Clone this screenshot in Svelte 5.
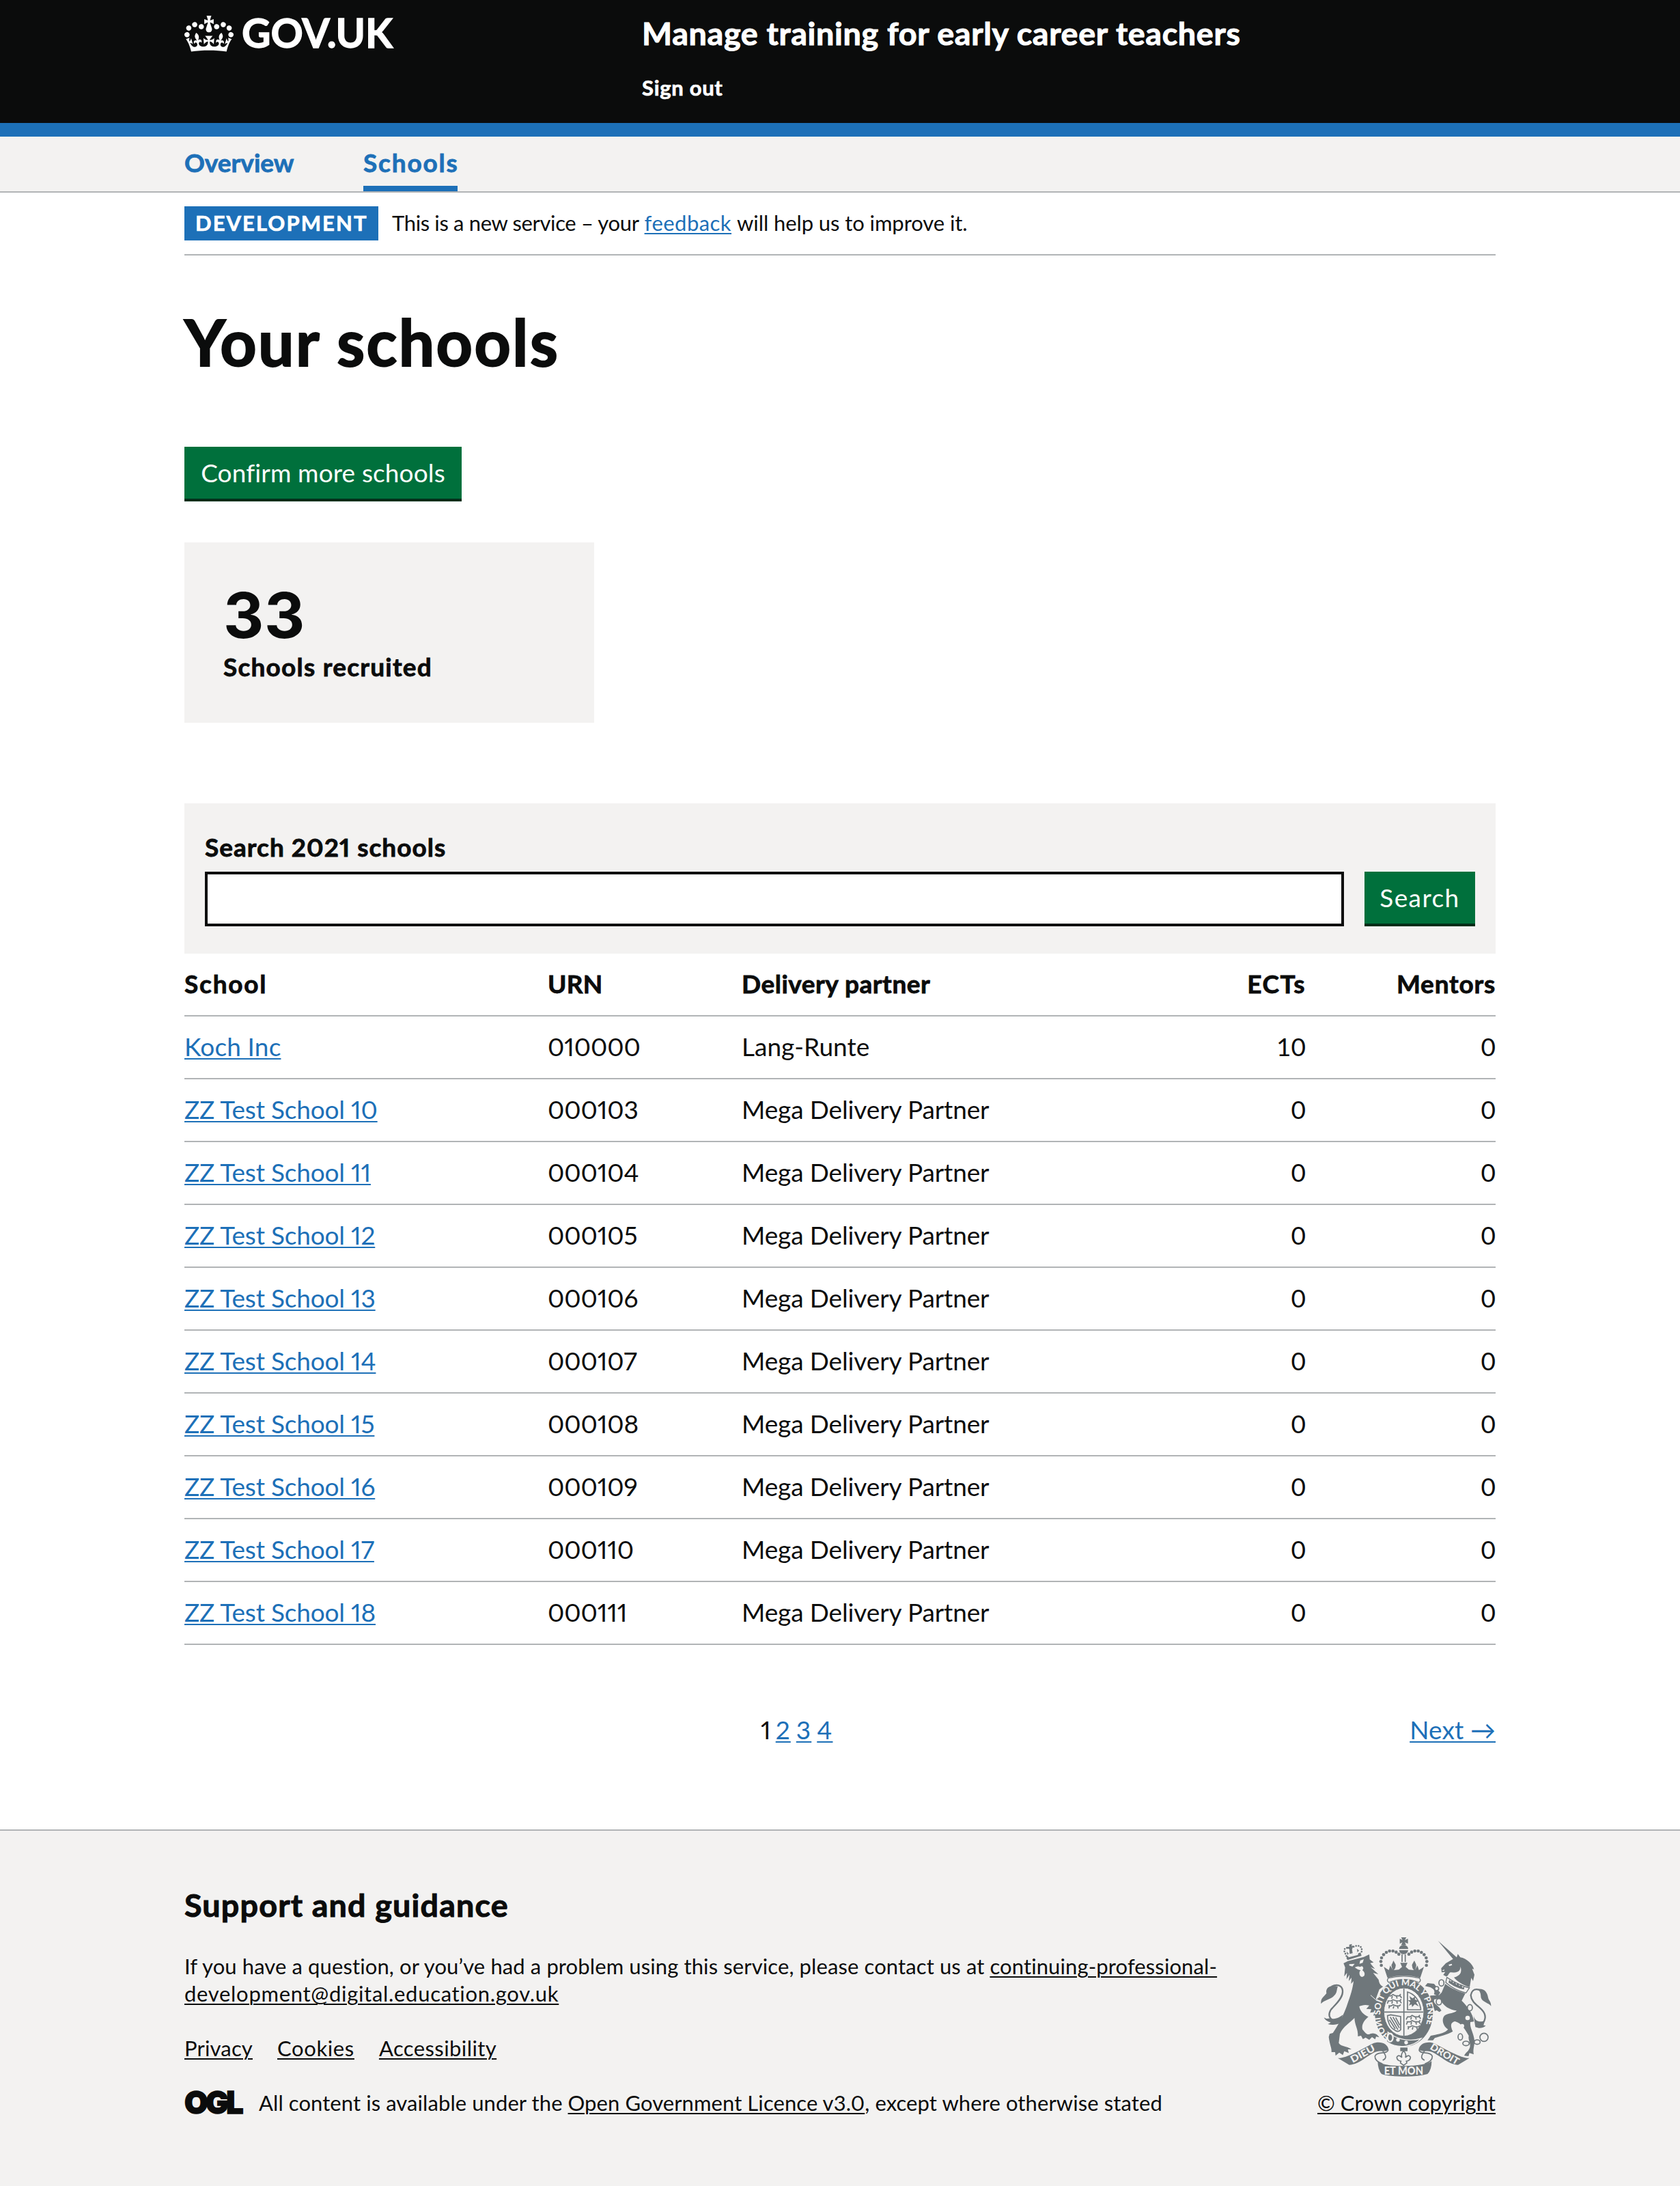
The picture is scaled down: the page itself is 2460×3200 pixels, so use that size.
<script>
  const schools = [
    { name: 'Koch Inc', urn: '010000', partner: 'Lang-Runte', ects: 10, mentors: 0 },
    ...Array.from({ length: 9 }, (_, i) => ({
      name: `ZZ Test School ${10 + i}`,
      urn: `000${103 + i}`,
      partner: 'Mega Delivery Partner',
      ects: 0,
      mentors: 0
    }))
  ];
  const otherPages = [2, 3, 4];

  // Pearls along the left arch of the crown; the right arch mirrors them.
  const pearls = [[369, 231], [367, 214], [370, 198], [379, 184], [391, 174], [405, 168], [420, 168], [434, 173], [446, 182]];
  const chain = [[633, 308, 11, 14], [612, 333, 9, 9], [622, 391, 12, 14], [758, 417, 11, 14], [716, 545, 10, 14], [741, 574, 14, 10], [790, 568, 13, 10], [820, 547, 18, 18]];
</script>

<header class="header">
  <div class="container header-row">
    <a class="logo" href="#home">
      <svg class="crown" viewBox="0 0 132 97" aria-hidden="true"><path fill="currentColor" fill-rule="evenodd" d="M25 30.2c3.5 1.5 7.7-.2 9.1-3.7 1.5-3.6-.2-7.8-3.9-9.2-3.6-1.4-7.6.3-9.1 3.9-1.4 3.5.3 7.5 3.9 9zM9 39.5c3.6 1.5 7.8-.2 9.2-3.7 1.5-3.6-.2-7.8-3.9-9.1-3.6-1.5-7.6.2-9.1 3.8-1.4 3.5.3 7.5 3.8 9zM4.4 57.2c3.5 1.5 7.7-.2 9.1-3.8 1.5-3.6-.2-7.7-3.9-9.1-3.5-1.5-7.6.3-9.1 3.8-1.4 3.5.3 7.6 3.9 9.1zm38.3-21.4c3.5 1.5 7.7-.2 9.1-3.8 1.5-3.6-.2-7.7-3.9-9.1-3.6-1.5-7.6.3-9.1 3.8-1.3 3.6.4 7.7 3.9 9.1zm64.4-5.6c-3.6 1.5-7.8-.2-9.1-3.7-1.5-3.6.2-7.8 3.8-9.2 3.6-1.4 7.7.3 9.2 3.9 1.3 3.5-.4 7.5-3.9 9zm15.9 9.3c-3.6 1.5-7.7-.2-9.1-3.7-1.5-3.6.2-7.8 3.7-9.1 3.6-1.5 7.7.2 9.2 3.8 1.5 3.5-.3 7.5-3.8 9zm4.7 17.7c-3.6 1.5-7.8-.2-9.2-3.8-1.5-3.6.2-7.7 3.9-9.1 3.6-1.5 7.7.3 9.2 3.8 1.3 3.5-.4 7.6-3.9 9.1zM89.3 35.8c-3.6 1.5-7.8-.2-9.2-3.8-1.4-3.6.2-7.7 3.9-9.1 3.6-1.5 7.7.3 9.2 3.8 1.4 3.6-.3 7.7-3.9 9.1zM69.7 17.7l8.9 4.7V9.3l-8.9 2.8c-.2-.3-.5-.6-.9-.9L72.4 0H59.6l3.5 11.2c-.3.3-.6.5-.9.9l-8.8-2.8v13.1l8.8-4.7c.3.3.6.7.9.9l-5 15.4v.1c-.2.8-.4 1.6-.4 2.4 0 4.1 3.1 7.5 7 8.1h.2c.3 0 .7.1 1 .1.4 0 .7 0 1-.1h.2c4-.6 7.1-4.1 7.1-8.1 0-.8-.1-1.7-.4-2.4V34l-5.1-15.4c.4-.2.7-.6 1-.9zM66 92.8c16.9 0 32.8 1.1 47.1 3.2 4-16.9 8.9-26.7 14-33.5l-9.6-3.4c1 4.9 1.1 7.2 0 10.2-1.5-1.4-3-4.3-4.2-8.7L108.6 76c2.8-2 5-3.2 7.5-3.3-4.4 9.4-10 11.9-13.6 11.2-4.3-.8-6.3-4.6-5.6-7.9 1-4.7 5.7-5.9 8-.5 4.3-8.7-3-11.4-7.6-8.8 7.1-7.2 7.9-13.5 2.1-21.1-8 6.1-8.1 12.3-4.5 20.8-4.7-5.4-12.1-2.5-9.5 6.2 3.4-5.2 7.9-2 7.2 3.1-.6 4.3-6.4 7.8-13.5 7.2-10.3-.9-10.9-8-11.2-13.8 2.5-.5 7.1 1.8 11 7.3L80.2 60c-4.1 4.4-8 5.3-12.3 5.4 1.4-4.4 8-11.6 8-11.6H55.5s6.4 7.2 7.9 11.6c-4.2-.1-8-1-12.3-5.4l1.4 16.4c3.9-5.5 8.5-7.7 10.9-7.3-.3 5.8-.9 12.8-11.1 13.8-7.2.6-12.9-2.9-13.5-7.2-.7-5 3.8-8.3 7.1-3.1 2.7-8.7-4.6-11.6-9.4-6.2 3.7-8.5 3.6-14.7-4.6-20.8-5.8 7.6-5 13.9 2.2 21.1-4.7-2.6-11.9.1-7.7 8.8 2.3-5.5 7.1-4.2 8.1.5.7 3.3-1.3 7.1-5.7 7.9-3.5.7-9-1.8-13.5-11.2 2.5.1 4.7 1.3 7.5 3.3l-4.7-15.4c-1.2 4.4-2.7 7.2-4.3 8.7-1.1-3-.9-5.3 0-10.2l-9.5 3.4c5 6.9 9.9 16.7 14 33.5 14.8-2.1 30.8-3.2 47.7-3.2z" /></svg>
      <span>GOV.UK</span>
    </a>
    <div class="header-content">
      <div class="service">Manage training for early career teachers</div>
      <div class="signout">Sign out</div>
    </div>
  </div>
</header>

<nav class="nav">
  <div class="container nav-row">
    <a class="nav-item overview" href="#overview">Overview</a>
    <a class="nav-item current" href="#schools">Schools</a>
  </div>
</nav>

<main class="container">
  <div class="phase">
    <strong class="tag">DEVELOPMENT</strong>
    <p class="phase-text"><span class="phase-a">This is a new service – your</span> <a class="feedback" href="#feedback">feedback</a> <span class="phase-b">will help us to improve it.</span></p>
  </div>

  <h1>Your schools</h1>
  <a class="button" href="#confirm">Confirm more schools</a>

  <div class="card">
    <div class="count">33</div>
    <div class="count-label">Schools recruited</div>
  </div>

  <form class="search">
    <label for="query">Search 2021 schools</label>
    <div class="search-row">
      <input id="query" type="text" />
      <button class="search-button" type="button">Search</button>
    </div>
  </form>

  <table>
    <colgroup><col class="c-school" /><col class="c-urn" /><col class="c-partner" /><col class="c-ects" /><col class="c-mentors" /></colgroup>
    <thead>
      <tr>
        <th class="h-school">School</th>
        <th class="h-urn">URN</th>
        <th class="h-partner">Delivery partner</th>
        <th class="num h-ects">ECTs</th>
        <th class="num h-mentors">Mentors</th>
      </tr>
    </thead>
    <tbody>
      {#each schools as s, i}
        <tr>
          <td><a class:koch={i === 0} class="school" href="#school">{s.name}</a></td>
          <td class="urn">{s.urn}</td>
          <td class:lang={i === 0} class="partner">{s.partner}</td>
          <td class="num">{s.ects}</td>
          <td class="num">{s.mentors}</td>
        </tr>
      {/each}
    </tbody>
  </table>

  <div class="pagination">
    <span></span>
    <div class="pages">
      <span class="page-current">1</span>
      {#each otherPages as p}<a href="#page">{p}</a>{/each}
    </div>
    <a class="next" href="#next">Next →</a>
  </div>
</main>

<footer class="footer">
  <div class="container footer-row">
    <div class="footer-main">
      <h2>Support and guidance</h2>
      <p><span class="contact">If you have a question, or you’ve had a problem using this service, please contact us at</span> <a class="mail" href="#mail"><span class="mail-a">continuing-professional-</span><br />development@digital.education.gov.uk</a></p>
      <div class="links">
        <a class="privacy" href="#privacy">Privacy</a>
        <a class="cookies" href="#cookies">Cookies</a>
        <a class="access" href="#accessibility">Accessibility</a>
      </div>
      <div class="licence">
        <svg class="ogl" viewBox="0 0 82 40" aria-label="OGL"><text x="0" y="35.5" textLength="83" lengthAdjust="spacingAndGlyphs">OGL</text></svg>
        <span><span class="lic-a">All content is available under the</span> <a class="lic-b" href="#ogl">Open Government Licence v3.0</a><span class="lic-c">, except where otherwise stated</span></span>
      </div>
    </div>

    <div class="crest">
      <svg class="arms" viewBox="100 105 756 615" aria-hidden="true">
        <defs>
          <path id="garter" d="M 408 546 A 104 125 0 1 1 536 539" />
          <g id="ribbon">
            <path class="f" d="M178 638C215 640 280 600 330 575C360 562 398 572 401 603L376 609C350 603 330 617 300 637C275 655 250 668 228 668z" />
            <path class="s" d="M399 602C396 625 348 606 341 630C340 645 356 657 374 664M376 609C388 625 396 638 375 648" />
          </g>
          <g id="lions">
            <path class="t" d="M398 365h14l8-6 12 6h16l6-8M400 365l-6 12M418 366l-4 11M436 366l2 11M450 362l8 12M396 387h16l8-5 14 5h16l6-7M400 388l-5 11M418 388l-3 11M437 388l2 11M450 386l7 11M400 409h12l8-5 14 5h14l6-6M406 410l-4 10M424 410l-3 11M440 410l3 11" />
          </g>
        </defs>

        <!-- lion -->
        <path class="f" d="M203 222L222 212L292 194L316 183L318 205L335 218L320 221L341 247L322 239L356 270L333 264L357 294C360 312 366 320 377 324L360 337L345 378C372 400 378 425 374 456L364 463L356 455L346 464L349 448L334 452L339 436L320 439L325 424L303 422L316 407C295 402 285 406 272 411C275 430 290 448 312 457C298 470 280 488 286 512C300 530 310 540 322 531C338 526 352 533 360 547L346 544L342 556L328 546L316 558L300 548L288 555L280 540L266 543C268 510 252 495 251 462C235 480 200 500 187 532L182 572C195 590 215 583 238 600L222 600L226 616L206 608L200 625L184 614L168 628L166 612L150 612C152 595 142 580 138 545L142 532L156 528C175 500 205 450 222 395C232 370 244 330 247 300L236 312L238 285L226 300L229 272L216 292L218 264L206 280L210 240z" />
        <path class="l" d="M228 226l24-2-10 12-14-4zM276 210l16-6-5 16-14 4zM252 240q14-8 24-2q12-8 14 6l-4 9q14 10 8 24q-14 12-20-4q-4-14 4-20l-12-4z" />
        <path class="lc" d="M322 362l32 28 14 34" />
        <path class="f" d="M216 192l62-17 4 14-62 19z" /><path class="l" d="M222 186l10-5 9 4 9-7 9 3 10-7-3 11-41 11z" />
        <path class="d" d="M220 200L206 168C206 152 220 152 236 158C252 142 274 140 283 156L282 182" />
        <path class="f" d="M228 140l12-3-2 9 8-2 1 9-8-1 4 26-13 3-2-26-8 4-1-9 9 0zM216 170l10 9-6 6zM262 158l9 8-7 8z" />
        <path class="tail" d="M196 474C152 490 118 450 158 414C184 388 201 366 199 342C196 316 172 313 150 324" />
        <path class="f" d="M178 324C140 314 123 332 128 354C116 370 102 374 104 400C118 382 148 382 162 364C176 352 172 336 178 324zM117 460C130 470 138 462 148 464C168 470 188 458 200 448L190 484C172 494 150 494 134 489L147 482C134 478 122 472 117 460z" />

        <!-- unicorn -->
        <path class="f" d="M618 123L700 196L705 181L716 196C744 200 770 226 776 248L768 246L778 272L772 300L764 286L757 327C732 320 700 300 688 284C716 276 724 262 717 236C716 266 690 262 672 262C664 266 664 278 654 280L641 273L650 260L634 262L632 244L652 222L684 203z" />
        <path class="l" d="M664 228l14-4 2 6-12 4zM636 254l10-6-2 8z" />
        <path class="band" d="M657 284C684 302 718 322 756 330L741 352C710 345 674 326 652 306z" />
        <path class="f" d="M664 306l4-12 6 8 8-6 2 13 9-6 5 13 9-8 4 14 10-7 4 14 9-6-2 14C706 332 682 320 664 306z" />
        <path class="f" d="M650 312C676 332 708 347 738 354L722 386C748 412 770 440 776 478L760 480C756 505 776 530 778 562C779 585 770 600 775 622L756 616L752 630L733 628C740 612 748 612 754 600C768 580 748 560 753 540C738 515 722 484 692 477C672 482 672 498 683 521C658 536 625 542 604 550L596 560H572L586 540L606 536C630 530 648 528 662 512C640 498 632 468 646 452C664 440 692 442 700 430C672 428 640 410 626 378L602 380C592 398 626 410 633 430L624 436L612 428L604 432L596 408C584 396 578 378 584 364L622 362L634 350z" />
        <path class="f" d="M561 322L572 309L600 312C612 322 612 338 628 350L618 366L600 358C608 340 594 330 580 326z" />
        <circle class="l" cx="748" cy="462" r="10" /><circle class="l" cx="724" cy="497" r="9" />
        {#each chain as [cx, cy, rx, ry]}<ellipse class="ring" {cx} {cy} {rx} {ry} />{/each}
        <path class="tail" d="M826 368C806 328 768 326 762 362C764 408 834 420 824 466C822 476 816 486 806 490" />
        <path class="f" d="M790 336C820 330 834 348 838 372C840 386 852 390 851 410C840 394 806 392 806 366C806 352 800 340 790 336zM774 450C780 480 804 482 823 474L818 494L828 496C812 510 796 508 782 502z" />

        <!-- crown -->
        <path class="f" d="M456 108h23l-7 12 14-6v22l-14-6 6 12h-22l6-12-12 6v-22l12 6zM467 142q20 2 20 17h-40q0-15 20-17zM447 164h40q-2 17-20 18q-18-1-20-18z" />
        <path class="s" d="M460 182v34M474 182v34" />
        {#each pearls as [x, y]}<circle class="f" cx={x} cy={y} r="7" /><circle class="f" cx={936 - x} cy={y} r="7" />{/each}
        <path class="f" d="M380 238L402 252L408 232L420 252Q412 236 414 228Q418 222 422 210Q428 220 432 228Q434 240 424 252L446 250L460 238L452 220H484L476 238L490 250L512 252Q502 240 504 228Q508 220 514 210Q520 222 522 228Q524 236 516 252L528 232L534 252L556 238L540 286Q468 266 396 286z" />

        <!-- garter and shield -->
        <ellipse class="f" cx="468" cy="439" rx="128" ry="149" />
        <ellipse class="field" cx="468" cy="436" rx="88" ry="106" />
        <path class="capline" d="M400 287Q468 270 536 287Q546 298 534 306Q468 280 402 306Q390 298 400 287z" />
        <text class="motto"><textPath href="#garter" textLength="520">HOИI SOIT QUI MAL Y PENSE</textPath></text>
        <path class="s" d="M382 436h172M468 332v208" />
        <use href="#lions" /><use href="#lions" x="84" y="92" />
        <path class="s" d="M484 426V348Q530 362 542 420V426z" />
        <path class="f" d="M492 366l14 10 14-10-4 14 16 8-10 6 12 18-18-10-12 12-2-12-12 6 6-14-10-10 12 0z" />
        <path class="s" d="M396 452l14-4 44 8v58c-8 10-18 8-28 0C408 504 396 480 396 452z" /><path class="t" d="M408 458l34 56M420 458l28 48M432 460l18 34M404 470l26 40" />
        <path class="belt" d="M398 524C440 560 500 566 544 552C510 590 440 600 392 566z" />
        <ellipse class="buckle" cx="408" cy="548" rx="12" ry="18" /><circle class="l" cx="442" cy="558" r="8" /><circle class="l" cx="478" cy="570" r="8" />

        <!-- ribbon -->
        <use href="#ribbon" /><use href="#ribbon" transform="translate(934 0) scale(-1 1)" />
        <path class="f" d="M353 652Q372 672 467 673Q562 672 590 652Q590 690 572 708Q540 719 467 719Q394 719 370 708Q354 690 353 652z" />
        <path class="f" d="M452 592h32v16h-32z" /><path class="s" d="M467 606q-14 16-8 30q-14-16-22-2q0 16 18 18l-2 8 14 10 14-10-2-8q18-2 18-18q-8-14-22 2q6-14-8-30z" />
        <text class="word" x="467" y="711" textLength="172" lengthAdjust="spacingAndGlyphs">ET MON</text>
        <text class="word small" transform="translate(294 632) rotate(-29)" textLength="116" lengthAdjust="spacingAndGlyphs">DIEU</text>
        <text class="word small" transform="translate(640 633) rotate(31)" textLength="140" lengthAdjust="spacingAndGlyphs">DROIT</text>
      </svg>
      <a class="copyright" href="#copyright">© Crown copyright</a>
    </div>
  </div>
</footer>

<style>
  :global(body) { margin: 0; background: #fff; }
  :global(#app) {
    font-family: Lato, 'Noto Sans', sans-serif;
    font-size: 37px;
    line-height: 50px;
    color: #0b0c0c;
    font-variant-numeric: proportional-nums;
  }
  a { color: #1d70b8; text-decoration-thickness: 2px; text-underline-offset: 3px; }
  h1, h2, p { margin: 0; }
  h1, h2, th, label, .logo, .service, .signout, .nav-item, .tag, .count-label { font-weight: 700; -webkit-text-stroke: 0.022em currentColor; }
  .container { width: 1920px; margin: 0 auto; }

  .header { height: 180px; background: #0b0c0c; border-bottom: 20px solid #1d70b8; color: #fff; }
  .header-row { display: flex; padding-top: 20px; }
  .logo { display: flex; width: 670px; color: #fff; text-decoration: none; font-size: 58.6px; line-height: 55px; letter-spacing: -0.002em; gap: 12px; }
  .crown { width: 72px; height: 53px; margin-top: 3px; }
  .service { font-size: 46.7px; line-height: 56px; letter-spacing: 0.0142em; }
  .signout { margin-top: 32px; font-size: 31px; line-height: 40px; letter-spacing: 0.0222em; }

  .nav { height: 80px; background: #f3f2f1; border-bottom: 2px solid #b1b4b6; }
  .nav-row { display: flex; gap: 102px; }
  .nav-item { box-sizing: border-box; height: 80px; padding-top: 18px; line-height: 40px; text-decoration: none; }
  .overview { width: 160px; }
  .current { width: 138px; border-bottom: 8px solid #1d70b8; letter-spacing: 0.049em; }

  .phase { display: flex; gap: 20px; padding: 20px 0; border-bottom: 2px solid #b1b4b6; font-size: 31px; line-height: 48px; }
  .tag { box-sizing: border-box; width: 284px; height: 50px; padding-left: 16px; background: #1d70b8; color: #fff; letter-spacing: 0.0664em; }
  .phase-a { letter-spacing: -0.0115em; }
  .feedback { letter-spacing: 0.015em; }
  .phase-b { letter-spacing: -0.0026em; }

  h1 { margin-top: 76px; font-size: 93px; line-height: 100px; letter-spacing: 0.0262em; }
  .button { display: block; width: 406px; height: 76px; margin-top: 104px; border-bottom: 4px solid #002d18; background: #00703c; color: #fff; line-height: 76px; text-align: center; text-decoration: none; letter-spacing: 0.0036em; }

  .card { box-sizing: border-box; width: 600px; height: 264px; margin-top: 60px; padding: 57px; background: #f3f2f1; }
  .count { font-family: Inter, sans-serif; font-size: 92px; font-weight: 700; line-height: 100px; letter-spacing: 0.008em; }
  .count-label { letter-spacing: 0.0331em; }

  .search { box-sizing: border-box; height: 220px; margin-top: 118px; padding: 39px 30px 0; background: #f3f2f1; }
  label { display: block; letter-spacing: 0.0275em; }
  .search-row { display: flex; gap: 30px; margin-top: 11px; }
  input { box-sizing: border-box; flex: 1; height: 80px; border: 4px solid #0b0c0c; border-radius: 0; background: #fff; }
  .search-button { box-sizing: border-box; width: 162px; height: 80px; padding: 0; border: 0; border-bottom: 4px solid #002d18; background: #00703c; color: #fff; font: inherit; line-height: 76px; letter-spacing: 0.038em; }

  table { width: 100%; table-layout: fixed; border-collapse: separate; border-spacing: 0; }
  .c-school { width: 532px; }
  .c-urn { width: 284px; }
  .c-partner { width: 600px; }
  .c-ects { width: 226px; }
  .c-mentors { width: 278px; }
  th, td { padding: 19px 0 21px; border-bottom: 2px solid #b1b4b6; text-align: left; }
  .num { text-align: right; font-variant-numeric: tabular-nums; }
  .h-school { letter-spacing: 0.048em; }
  .h-urn { letter-spacing: 0.006em; }
  .h-partner { letter-spacing: 0.0139em; }
  .h-ects { letter-spacing: 0.042em; }
  .h-mentors { letter-spacing: 0.021em; }
  .school { letter-spacing: -0.0053em; }
  .koch { letter-spacing: 0.004em; }
  .urn { letter-spacing: -0.003em; }
  .partner { letter-spacing: -0.0034em; }
  .lang { letter-spacing: 0; }

  .pagination { display: flex; justify-content: space-between; margin: 99px 0 121px; }
  .pages { display: flex; gap: 8px; }
  .pages a { letter-spacing: 0.03em; }
  .page-current { display: flex; justify-content: center; width: 13px; }
  .next { letter-spacing: 0.003em; }

  .footer { border-top: 2px solid #b1b4b6; background: #f3f2f1; font-size: 31px; line-height: 40px; }
  .footer a { color: #0b0c0c; }
  .footer-row { display: flex; justify-content: space-between; align-items: flex-end; padding: 78px 0 102px; }
  h2 { margin-bottom: 40px; font-size: 46.7px; line-height: 60px; letter-spacing: 0.0247em; }
  .contact { letter-spacing: 0.0035em; }
  .mail { letter-spacing: 0.0225em; }
  .mail-a { letter-spacing: 0.0035em; }
  .links { display: flex; gap: 36px; margin: 40px 0; }
  .privacy { letter-spacing: 0.005em; }
  .cookies { letter-spacing: 0.0203em; }
  .access { letter-spacing: 0.0132em; }
  .licence { display: flex; gap: 27px; white-space: nowrap; }
  .ogl { width: 82px; height: 40px; overflow: visible; fill: #0b0c0c; stroke: #0b0c0c; stroke-width: 1.5; font: 900 46px Inter, sans-serif; letter-spacing: -0.08em; }
  .lic-a { letter-spacing: 0.0025em; }
  .lic-b { letter-spacing: 0.0025em; }
  .lic-c { letter-spacing: 0.003em; }
  .crest { display: flex; flex-direction: column; align-items: flex-end; }
  .arms { width: 252px; height: 205px; margin: 0 5px 18px 0; }
  .copyright { letter-spacing: 0.0018em; white-space: nowrap; }

  .f { fill: #6f777b; }
  .l { fill: #f3f2f1; }
  .s, .t { fill: none; stroke: #6f777b; stroke-width: 5; }
  .lc { fill: none; stroke: #f3f2f1; stroke-width: 3; }
  .d { fill: none; stroke: #6f777b; stroke-width: 8; stroke-linecap: round; stroke-dasharray: 0 11; }
  .tail { fill: none; stroke: #6f777b; stroke-width: 7; }
  .ring { fill: #f3f2f1; stroke: #6f777b; stroke-width: 5; }
  .band, .capline { fill: #f3f2f1; stroke: #6f777b; stroke-width: 4; }
  .field { fill: #f3f2f1; stroke: #6f777b; stroke-width: 3; }
  .belt { fill: #6f777b; stroke: #f3f2f1; stroke-width: 4; }
  .buckle { fill: none; stroke: #f3f2f1; stroke-width: 7; }
  .motto { fill: #f3f2f1; font: 900 38px Lato, sans-serif; }
  .word { fill: #f3f2f1; font: 900 50px Lato, sans-serif; text-anchor: middle; }
  .small { font-size: 42px; }
</style>
